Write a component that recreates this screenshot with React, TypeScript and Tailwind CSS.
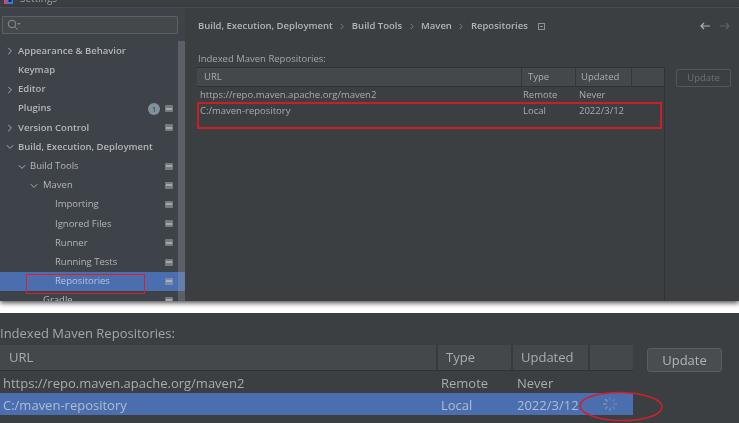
const font = { fontFamily: '"Open Sans", "Noto Sans", sans-serif' };

function Chevron({ open, x }: { open: boolean; x: number }) {
  return (
    <svg width="8" height="8" viewBox="0 0 8 8" className="absolute top-[6px]" style={{ left: x }} fill="none" stroke="#a9adb0" strokeWidth="1">
      {open ? <path d="M0.8 2.2 L4 5.4 L7.2 2.2" /> : <path d="M2.2 0.8 L5.4 4 L2.2 7.2" />}
    </svg>
  );
}

function Mini({ dim }: { dim?: boolean }) {
  return (
    <span className={`flex h-[7px] w-[8px] items-center justify-center rounded-[1px] ${dim ? "bg-[#7b8ba8]" : "bg-[#777b7f]"}`}>
      <span className={`h-[2px] w-[6px] ${dim ? "bg-[#a3b0c6]" : "bg-[#a5a8aa]"}`} />
    </span>
  );
}

type Row = { label: string; indent: number; chevron?: "open" | "closed"; chevX?: number; bold?: boolean; mini?: boolean; badge?: boolean; selected?: boolean };

const rows: Row[] = [
  { label: "Appearance & Behavior", indent: 18, chevron: "closed", chevX: 6, bold: true },
  { label: "Keymap", indent: 18, bold: true },
  { label: "Editor", indent: 18, chevron: "closed", chevX: 6, bold: true },
  { label: "Plugins", indent: 18, bold: true, mini: true, badge: true },
  { label: "Version Control", indent: 18, chevron: "closed", chevX: 6, bold: true, mini: true },
  { label: "Build, Execution, Deployment", indent: 18, chevron: "open", chevX: 6, bold: true },
  { label: "Build Tools", indent: 30, chevron: "open", chevX: 18, mini: true },
  { label: "Maven", indent: 43, chevron: "open", chevX: 30, mini: true },
  { label: "Importing", indent: 55, mini: true },
  { label: "Ignored Files", indent: 55, mini: true },
  { label: "Runner", indent: 55, mini: true },
  { label: "Running Tests", indent: 55, mini: true },
  { label: "Repositories", indent: 55, mini: true, selected: true },
  { label: "Gradle", indent: 43, mini: true },
];

function SideRow({ r }: { r: Row }) {
  return (
    <div className={`relative flex h-[19.2px] shrink-0 items-center pr-[12px] text-[9.5px] ${r.selected ? "bg-[#4b6eaf] text-[#b9c4d8]" : "text-[#b4b7b9]"} ${r.bold ? "font-semibold" : ""}`} style={{ paddingLeft: r.indent }}>
      {r.chevron && <Chevron open={r.chevron === "open"} x={r.chevX ?? 0} />}
      <span className="flex-1 whitespace-nowrap">{r.label}</span>
      {r.badge && (
        <span className="mr-[5px] flex h-[12px] w-[12px] items-center justify-center rounded-full bg-[#80909c] text-[8px] font-normal text-[#3c3f41]">1</span>
      )}
      {r.mini && <Mini dim={r.selected} />}
    </div>
  );
}

function Sidebar() {
  return (
    <div className="relative flex h-full w-[185px] shrink-0 flex-col overflow-hidden bg-[#3e4249]">
      <div className="pl-[2px] pr-[7px] pt-[8px]">
        <div className="flex h-[18px] items-center rounded-[1px] border border-[#5d6160] bg-[#44484a] pl-[4px]">
          <svg width="14" height="12" viewBox="0 0 14 12" fill="none" stroke="#8b8f92" strokeWidth="1">
            <circle cx="5" cy="5" r="3.8" />
            <path d="M7.8 7.8 L10.6 10.6" />
            <path d="M10.5 4 L13.5 4 L12 6 Z" fill="#8b8f92" stroke="none" />
          </svg>
        </div>
      </div>
      <div className="mt-[7.4px] flex min-h-0 flex-1 flex-col">
        {rows.map((r) => (
          <SideRow key={r.label} r={r} />
        ))}
      </div>
      <div className="absolute bottom-0 right-0 top-[33px] w-[7px] bg-[#a0a4a8]/30" />
    </div>
  );
}

function Crumb({ text }: { text: string }) {
  return <span className="whitespace-nowrap font-semibold text-[#b2b5b7]">{text}</span>;
}

function Sep() {
  return (
    <svg width="4" height="7" viewBox="0 0 4 7" fill="none" stroke="#85888a" strokeWidth="0.9" className="mx-[7.5px]">
      <path d="M0.7 0.8 L3.2 3.5 L0.7 6.2" />
    </svg>
  );
}

function TopContent() {
  return (
    <div className="flex h-full min-w-0 flex-1 flex-col bg-[#3c3f41] pl-[12px]">
      <div className="flex h-[27px] shrink-0 items-center pl-[1px] pr-[9px] pt-[9px] text-[9.5px]">
        <Crumb text="Build, Execution, Deployment" />
        <Sep />
        <Crumb text="Build Tools" />
        <Sep />
        <Crumb text="Maven" />
        <Sep />
        <Crumb text="Repositories" />
        <span className="ml-[10px] flex h-[7px] w-[7px] items-center justify-center border border-[#8c9093]">
          <span className="h-[1px] w-[3px] bg-[#8c9093]" />
        </span>
        <span className="flex-1" />
        <svg width="10" height="8" viewBox="0 0 10 8" fill="none" stroke="#afb1b3" strokeWidth="1.2">
          <path d="M10 4 H1 M4 1 L1 4 L4 7" />
        </svg>
        <svg width="10" height="8" viewBox="0 0 10 8" fill="none" stroke="#5f6366" strokeWidth="1.2" className="ml-[10px]">
          <path d="M0 4 H9 M6 1 L9 4 L6 7" />
        </svg>
      </div>
      <div className="mt-[17px] h-[14px] pl-[1px] text-[9.5px] leading-[14px] text-[#a4a7a9]">Indexed Maven Repositories:</div>
      <div className="mt-[1px] flex min-h-0 flex-1 gap-[11px] pr-[8px]">
        <div className="flex h-full w-[468px] flex-col border-r border-t border-[#303335]">
          <div className="flex h-[19px] shrink-0 border-b border-[#303335] bg-[#45484a] text-[9.5px] text-[#a9acae]">
            <div className="flex w-[325px] items-center border-r border-[#34373a] pl-[7px]">URL</div>
            <div className="flex w-[54px] items-center border-r border-[#34373a] pl-[6px]">Type</div>
            <div className="flex w-[56px] items-center border-r border-[#34373a] pl-[5px]">Updated</div>
            <div className="flex-1" />
          </div>
          <div className="flex h-[16px] shrink-0 items-center text-[9.5px] text-[#a9acae]">
            <div className="w-[325px] pl-[3px]">https://repo.maven.apache.org/maven2</div>
            <div className="w-[57px] pl-[1px]">Remote</div>
            <div>Never</div>
          </div>
          <div className="flex h-[16px] shrink-0 items-center text-[9.5px] text-[#a9acae]">
            <div className="w-[325px] pl-[3px]">C:/maven-repository</div>
            <div className="w-[57px] pl-[1px]">Local</div>
            <div>2022/3/12</div>
          </div>
        </div>
        <div className="mt-[2px] flex h-[18px] w-[55px] items-center justify-center rounded-[2px] border border-[#535658] text-[9.5px] text-[#6d7072]">Update</div>
      </div>
    </div>
  );
}

function Spinner() {
  const spokes = Array.from({ length: 8 }, (_, i) => i * 45);
  return (
    <svg width="16" height="16" viewBox="-8 -8 16 16" className="absolute left-[602px] top-[83px]">
      {spokes.map((a, i) => (
        <line key={a} x1="0" y1="-3.5" x2="0" y2="-7" stroke="#8ea0c0" strokeOpacity={0.3 + i * 0.06} strokeWidth="1.6" transform={`rotate(${a})`} />
      ))}
    </svg>
  );
}

function Bottom() {
  return (
    <div className="relative h-[110px] bg-[#3c3f41]">
      <div className="h-[32px] pt-[10px] text-[13px] leading-[20px] text-[#a4a7a9]">Indexed Maven Repositories:</div>
      <div className="flex">
        <div className="w-[633px]">
          <div className="flex h-[26px] border-b border-[#303335] bg-[#45484a] text-[13px] text-[#a9acae]">
            <div className="flex w-[438px] items-center border-r-2 border-[#383b3d] pl-[9px] pt-[1px]">URL</div>
            <div className="flex w-[75px] items-center border-r-2 border-[#383b3d] pl-[8px] pt-[1px]">Type</div>
            <div className="flex w-[77px] items-center border-r-2 border-[#383b3d] pl-[8px] pt-[1px]">Updated</div>
            <div className="flex-1" />
          </div>
          <div className="flex h-[22px] items-center pt-[3px] text-[13px] text-[#a9acae]">
            <div className="w-[441px] pl-[3px]">https://repo.maven.apache.org/maven2</div>
            <div className="w-[76px]">Remote</div>
            <div>Never</div>
          </div>
          <div className="flex h-[22px] items-center bg-[#4b6eaf] pt-[3px] text-[13px] text-[#b0bdd3]">
            <div className="w-[441px] pl-[3px]">C:/maven-repository</div>
            <div className="w-[76px]">Local</div>
            <div>2022/3/12</div>
          </div>
        </div>
        <div className="ml-[14px] mt-[3px] flex h-[24px] w-[75px] items-center justify-center rounded-[3px] border border-[#5a5d5f] bg-[#4a4d4f] pt-[1px] text-[13px] text-[#b2b5b7]">Update</div>
      </div>
      <Spinner />
    </div>
  );
}

export default function App() {
  return (
    <div className="relative h-[423px] w-[739px] overflow-hidden bg-white blur-[0.35px]" style={font}>
      <div className="flex h-[8px] items-start overflow-hidden border-b border-[#55585a] bg-[#3c3f41]">
        <svg width="10" height="5" viewBox="0 0 10 5" className="ml-[4px]">
          <rect x="0" y="0" width="4" height="4" fill="#e0407a" />
          <rect x="3" y="0" width="6" height="4" fill="#2f7fe0" />
          <rect x="4.5" y="0" width="3" height="2" fill="#1c2a3c" />
        </svg>
        <span className="ml-[6px] mt-[-8px] text-[10px] leading-[12px] text-[#9a9d9f]">Settings</span>
      </div>
      <div className="flex h-[293px] shadow-[0_2px_5px_rgba(0,0,0,0.7)]">
        <Sidebar />
        <TopContent />
      </div>
      <div className="h-[12px]" />
      <Bottom />

      {/* Red annotations drawn over the screenshot */}
      <div className="absolute left-[26px] top-[274px] h-[20px] w-[119px] border border-[#d9202c]" />
      <div className="absolute left-[197px] top-[102px] h-[27px] w-[465px] border-2 border-[#c8202a]" />
      <svg width="86" height="32" viewBox="0 0 86 32" className="absolute left-[578px] top-[391px]" fill="none" stroke="#d0202c" strokeWidth="1.6">
        <ellipse cx="43" cy="15.5" rx="41" ry="14" transform="rotate(1 43 15.5)" />
      </svg>
    </div>
  );
}
